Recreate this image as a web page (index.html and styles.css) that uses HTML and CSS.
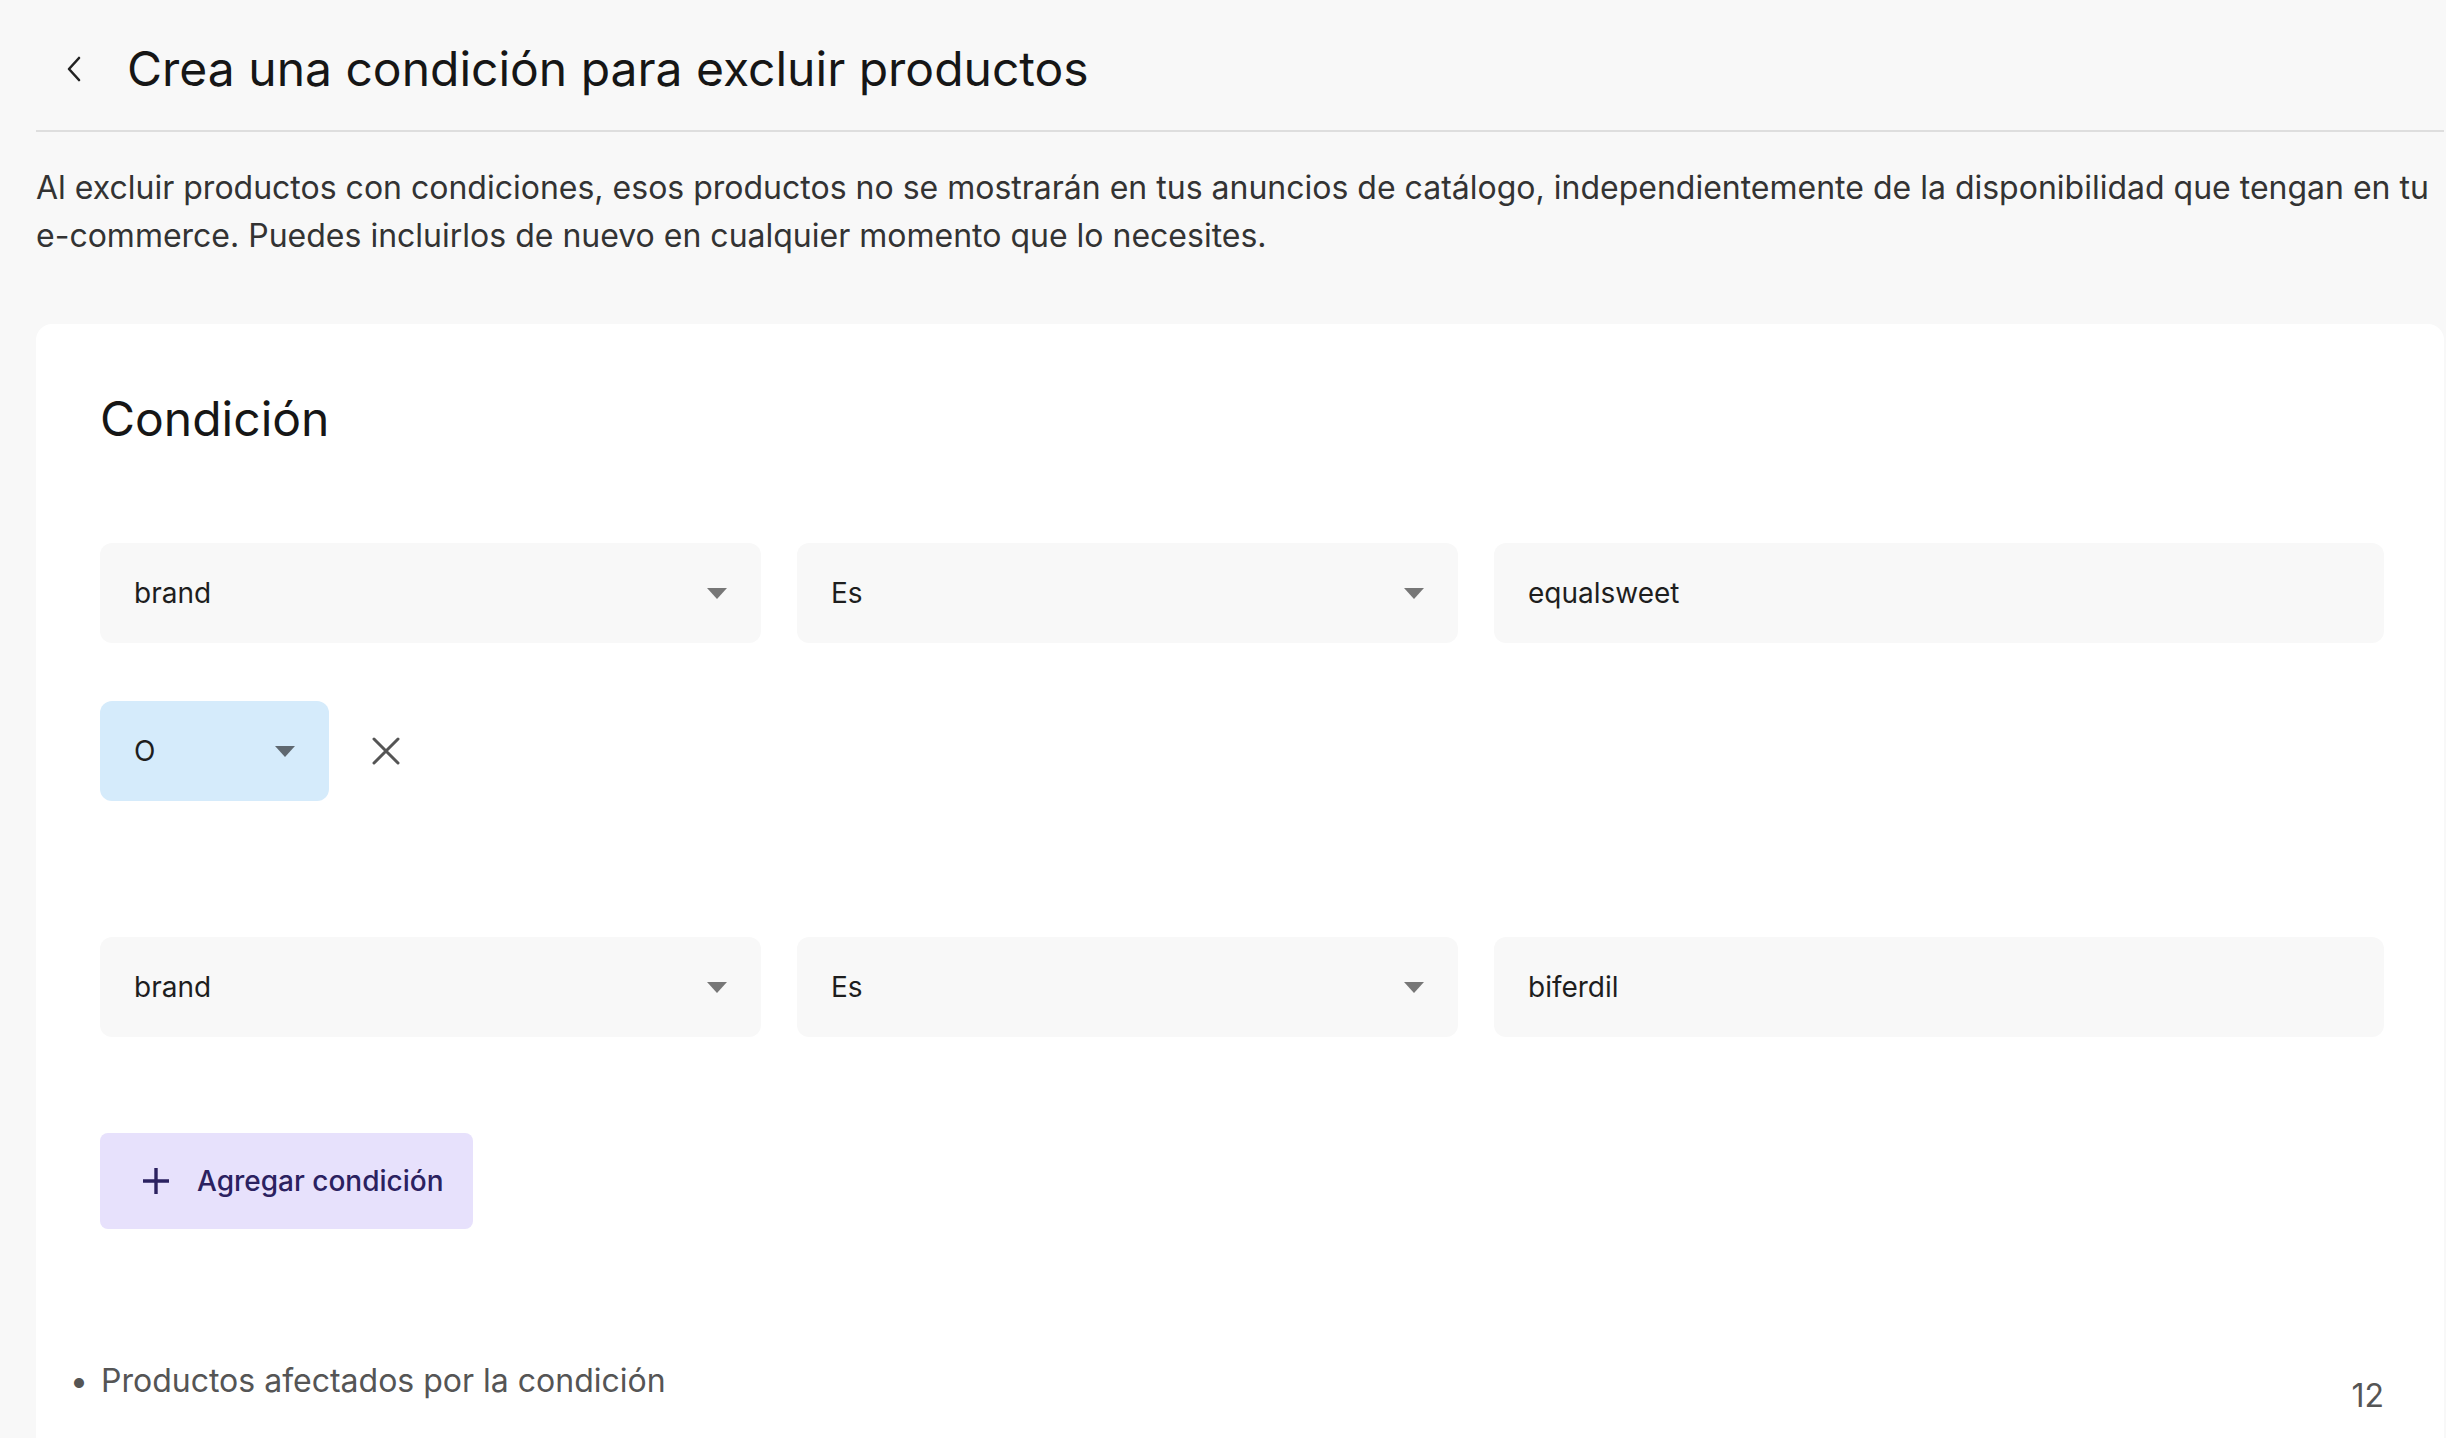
FILE: index.html
```html
<!DOCTYPE html>
<html lang="es">
<head>
    <meta charset="UTF-8">
    <meta name="viewport" content="width=device-width, initial-scale=1.0">
    <title>Crea una condición para excluir productos</title>
    <link rel="stylesheet" href="styles.css">
</head>
<body>
    <div class="page">
        <header class="page-header">
            <button class="back-btn" aria-label="Volver">
                <svg width="16" height="26" viewBox="0 0 16 26" fill="none">
                    <path d="M13 2 L3 13 L13 24" stroke="#222" stroke-width="2.6" stroke-linecap="round" stroke-linejoin="round"/>
                </svg>
            </button>
            <h1>Crea una condición para excluir productos</h1>
        </header>

        <p class="intro">Al excluir productos con condiciones, esos productos no se mostrarán en tus anuncios de catálogo, independientemente de la disponibilidad que tengan en tu e-commerce. Puedes incluirlos de nuevo en cualquier momento que lo necesites.</p>

        <section class="card">
            <h2>Condición</h2>

            <div class="rule-row">
                <div class="field select">
                    <span>brand</span>
                    <span class="caret"></span>
                </div>
                <div class="field select">
                    <span>Es</span>
                    <span class="caret"></span>
                </div>
                <div class="field">
                    <span>equalsweet</span>
                </div>
            </div>

            <div class="joiner">
                <div class="field select joiner-select">
                    <span>O</span>
                    <span class="caret"></span>
                </div>
                <button class="remove-btn" aria-label="Quitar">
                    <svg width="30" height="30" viewBox="0 0 30 30" fill="none">
                        <path d="M3 3 L27 27 M27 3 L3 27" stroke="#555" stroke-width="3" stroke-linecap="round"/>
                    </svg>
                </button>
            </div>

            <div class="rule-row rule-row-last">
                <div class="field select">
                    <span>brand</span>
                    <span class="caret"></span>
                </div>
                <div class="field select">
                    <span>Es</span>
                    <span class="caret"></span>
                </div>
                <div class="field">
                    <span>biferdil</span>
                </div>
            </div>

            <button class="add-btn">
                <svg width="28" height="28" viewBox="0 0 28 28" fill="none">
                    <path d="M14 1 V27 M1 14 H27" stroke="#2b2160" stroke-width="3.4"/>
                </svg>
                <span>Agregar condición</span>
            </button>

            <div class="affected">
                <span class="affected-label"><span class="bullet">•</span>Productos afectados por la condición</span>
                <span class="count">12</span>
            </div>
        </section>
    </div>
</body>
</html>
```

FILE: styles.css
```css
body {
    margin: 0;
    padding: 0;
    background-color: #f8f8f8;
    font-family: Inter, 'Noto Sans', sans-serif;
    color: #1a1a1a;
}

.page {
    padding: 0 2px 0 36px;
}

.page-header {
    display: flex;
    align-items: center;
    padding: 40px 0 32px 0;
    border-bottom: 2px solid #dedede;
}

.back-btn {
    display: flex;
    align-items: center;
    background: none;
    border: none;
    padding: 0;
    margin-left: 30px;
    margin-right: 45px;
    cursor: pointer;
}

h1 {
    margin: 0;
    font-size: 48px;
    line-height: 58px;
    font-weight: 400;
    color: #161616;
}

.intro {
    margin: 32px -2px 0 0;
    font-size: 32px;
    line-height: 48px;
    color: #333;
}

.card {
    margin-top: 64px;
    min-height: 1200px;
    padding: 66px 60px 0 64px;
    background-color: #fff;
    border-radius: 16px 16px 0 0;
}

h2 {
    margin: 0;
    font-size: 48px;
    line-height: 58px;
    font-weight: 400;
    color: #161616;
}

.rule-row {
    display: grid;
    grid-template-columns: 661px 661px 1fr;
    gap: 36px;
    margin-top: 95px;
}

.rule-row-last {
    margin-top: 136px;
}

.field {
    display: flex;
    align-items: center;
    justify-content: space-between;
    height: 100px;
    padding: 0 34px;
    background-color: #f8f8f8;
    border-radius: 12px;
    font-size: 28px;
    color: #1e1e1e;
    box-sizing: border-box;
}

.caret {
    width: 0;
    height: 0;
    border-left: 10px solid transparent;
    border-right: 10px solid transparent;
    border-top: 11px solid #777;
}

.joiner {
    display: flex;
    align-items: center;
    gap: 42px;
    margin-top: 58px;
}

.joiner-select {
    width: 229px;
    background-color: #d5ebfb;
}

.joiner-select .caret {
    border-top-color: #5f6870;
}

.remove-btn {
    display: flex;
    background: none;
    border: none;
    padding: 0;
    cursor: pointer;
}

.add-btn {
    display: flex;
    align-items: center;
    gap: 27px;
    width: 373px;
    height: 96px;
    margin-top: 96px;
    padding: 0 0 0 42px;
    background-color: #e7e1fc;
    border: none;
    border-radius: 8px;
    font-family: Inter, 'Noto Sans', sans-serif;
    font-size: 28px;
    font-weight: 500;
    color: #2b2160;
    cursor: pointer;
}

.affected {
    display: flex;
    justify-content: space-between;
    align-items: flex-start;
    margin-top: 132px;
    font-size: 32px;
    line-height: 40px;
    color: #555;
}

.affected-label {
    margin-left: -30px;
}

.bullet {
    display: inline-block;
    width: 31px;
}

.count {
    margin-top: 15px;
    font-size: 32px;
}
```
